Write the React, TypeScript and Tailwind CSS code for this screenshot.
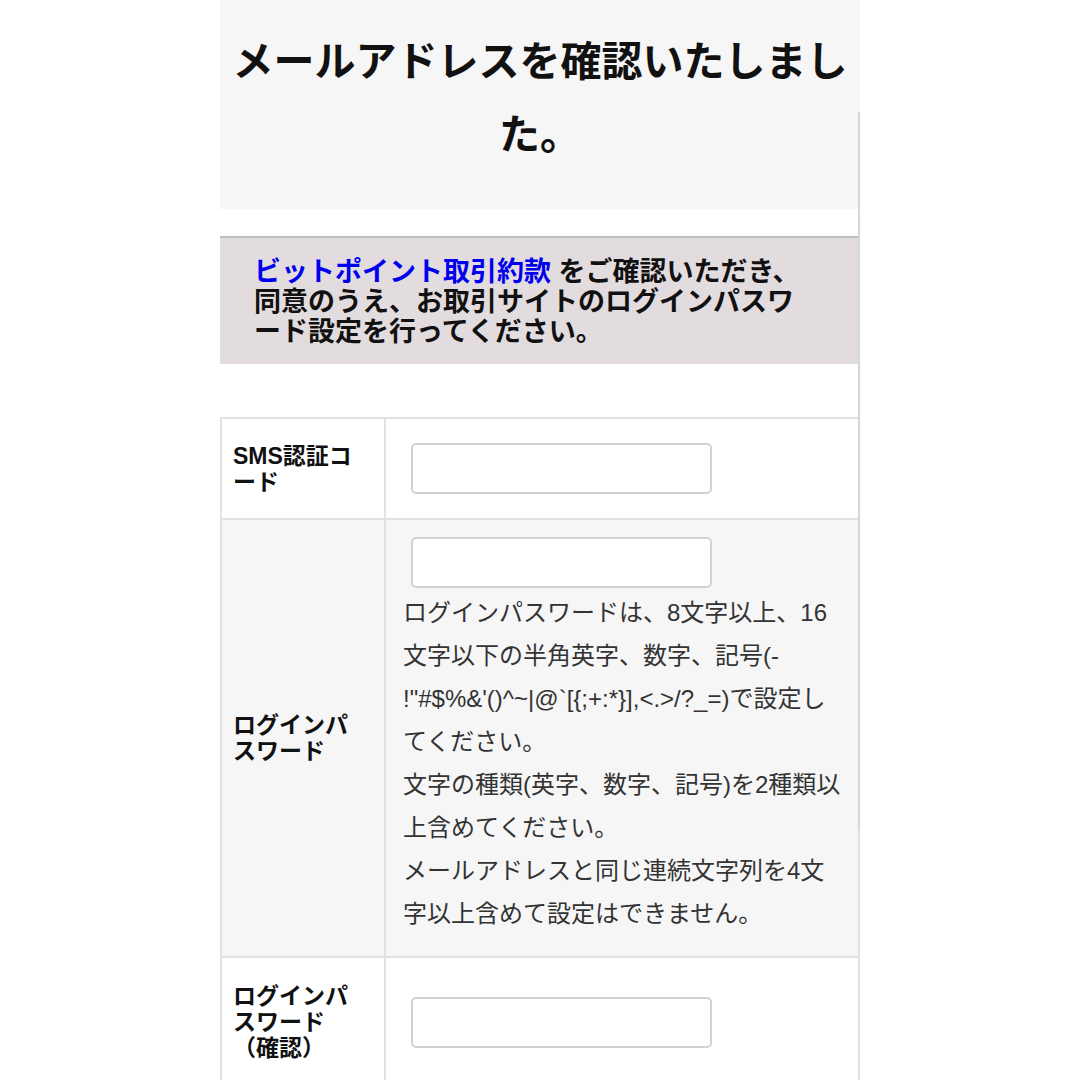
import React from "react";

const font = { fontFamily: '"Liberation Sans", "Noto Sans CJK JP", sans-serif' };

function Field() {
  return (
    <input
      type="text"
      className="ml-[8px] block h-[51px] w-[301px] rounded-[5px] border-2 border-[#d2d2d2] bg-white"
    />
  );
}

const descLines = [
  "ログインパスワードは、8文字以上、16",
  "文字以下の半角英字、数字、記号(-",
  "!\"#$%&'()^~|@`[{;+:*}],<.>/?_=)で設定し",
  "てください。",
  "文字の種類(英字、数字、記号)を2種類以",
  "上含めてください。",
  "メールアドレスと同じ連続文字列を4文",
  "字以上含めて設定はできません。",
];

export default function App() {
  return (
    <div className="flex min-h-[1080px] justify-center bg-white" style={font}>
      <div className="relative w-[640px]">
        <div className="bg-[#f6f6f6] px-[10px] pt-[26px] pb-[37px] text-center text-[41px] font-bold leading-[73px] text-[#111]">
          メールアドレスを確認いたしました。
        </div>

        <div className="h-[27px]" />

        <div className="border-t-2 border-[#bcbfbf] bg-[#e3dcdf] pl-[34px] pr-[45px] pt-[19px] pb-[17px] text-[27px] font-bold leading-[30px] text-[#111]">
          <span className="text-[#0000ee]">ビットポイント取引約款</span> をご確認いただき、同意のうえ、お取引サイトのログインパスワード設定を行ってください。
        </div>

        <div className="h-[53px]" />

        <table className="w-full table-fixed border-collapse">
          <colgroup>
            <col className="w-[164px]" />
            <col />
          </colgroup>
          <tbody>
            <tr className="bg-white">
              <td className="border-2 border-[#e2e2e2] pl-[11px] pr-[17px] align-middle text-[23px] font-bold leading-[26px] text-[#111]">
                SMS認証コード
              </td>
              <td className="border-2 border-[#e2e2e2] py-[24px] pl-[17px] pr-[5px] align-middle">
                <Field />
              </td>
            </tr>
            <tr className="bg-[#f6f6f6]">
              <td className="border-2 border-[#e2e2e2] pl-[11px] pr-[17px] align-middle text-[23px] font-bold leading-[26px] text-[#111]">
                ログインパスワード
              </td>
              <td className="border-2 border-[#e2e2e2] pt-[17px] pb-[21px] pl-[17px] pr-[5px] align-top">
                <Field />
                <div className="mt-[3px] flex flex-col text-[24px] leading-[43px] text-[#333]">
                  {descLines.map((l, i) => (
                    <span key={i} className="whitespace-nowrap">
                      {l}
                    </span>
                  ))}
                </div>
              </td>
            </tr>
            <tr className="bg-white">
              <td className="border-2 border-[#e2e2e2] py-[25px] pl-[11px] pr-[17px] align-middle text-[23px] font-bold leading-[26px] text-[#111]">
                ログインパスワード（確認）
              </td>
              <td className="border-2 border-[#e2e2e2] py-[24px] pl-[17px] pr-[5px] align-middle">
                <Field />
              </td>
            </tr>
          </tbody>
        </table>

        <div className="absolute left-[638px] top-[112px] h-[718px] w-[2px] bg-[#d6d6d6]" />
      </div>
    </div>
  );
}
